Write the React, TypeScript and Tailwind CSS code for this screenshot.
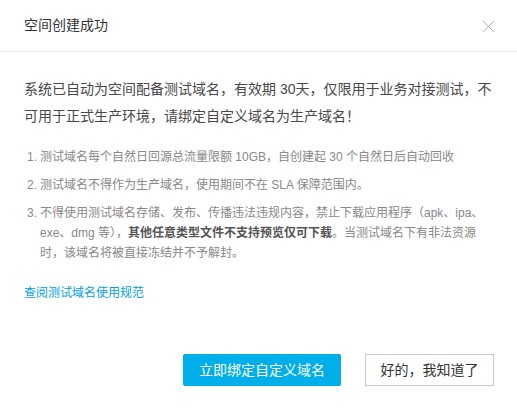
import { X } from "lucide-react";

const notes = [
  <>测试域名每个自然日回源总流量限额 10GB，自创建起 30 个自然日后自动回收</>,
  <>测试域名不得作为生产域名，使用期间不在 SLA 保障范围内。</>,
  <>
    不得使用测试域名存储、发布、传播违法违规内容，禁止下载应用程序（apk、ipa、exe、dmg 等），
    <b className="font-bold text-[#555]">其他任意类型文件不支持预览仅可下载</b>
    。当测试域名下有非法资源时，该域名将被直接冻结并不予解封。
  </>,
];

export default function App() {
  return (
    <div
      className="w-[517px] h-[409px] bg-white overflow-hidden"
      style={{ fontFamily: '"Liberation Sans", "Noto Sans CJK SC", sans-serif' }}
    >
      {/* Header */}
      <div className="h-[52px] px-6 flex items-center justify-between border-b border-[#e8e8e8]">
        <h1 className="text-[14px] text-[#333]">空间创建成功</h1>
        <button className="text-[#999] -mr-[6px] mt-[1px]">
          <X className="w-[21px] h-[21px]" strokeWidth={0.9} />
        </button>
      </div>

      {/* Body */}
      <div className="px-6 pt-[24px]">
        <p className="text-[14px] leading-[27px] text-[#484848]">
          系统已自动为空间配备测试域名，有效期 30天，仅限用于业务对接测试，不可用于正式生产环境，请绑定自定义域名为生产域名！
        </p>

        <ol className="mt-[17px] flex flex-col gap-[8px] text-[12px] leading-[20px] text-[#888]">
          {notes.map((note, i) => (
            <li key={i} className="flex">
              <span className="w-[16px] shrink-0 pl-[3px]">{i + 1}.</span>
              <span className="pr-[2px]">{note}</span>
            </li>
          ))}
        </ol>

        <a className="block mt-[20px] text-[12px] leading-[20px] text-[#00a2e4] cursor-pointer">
          查阅测试域名使用规范
        </a>

        {/* Footer */}
        <div className="mt-[51px] flex justify-end gap-6 -mr-[1px]">
          <button className="w-[158px] h-[32px] rounded-[2px] bg-[#00aeea] text-white text-[14px]">
            立即绑定自定义域名
          </button>
          <button className="w-[129px] h-[32px] border border-[#c8c8c8] bg-white text-[#333] text-[14px]">
            好的，我知道了
          </button>
        </div>
      </div>
    </div>
  );
}
